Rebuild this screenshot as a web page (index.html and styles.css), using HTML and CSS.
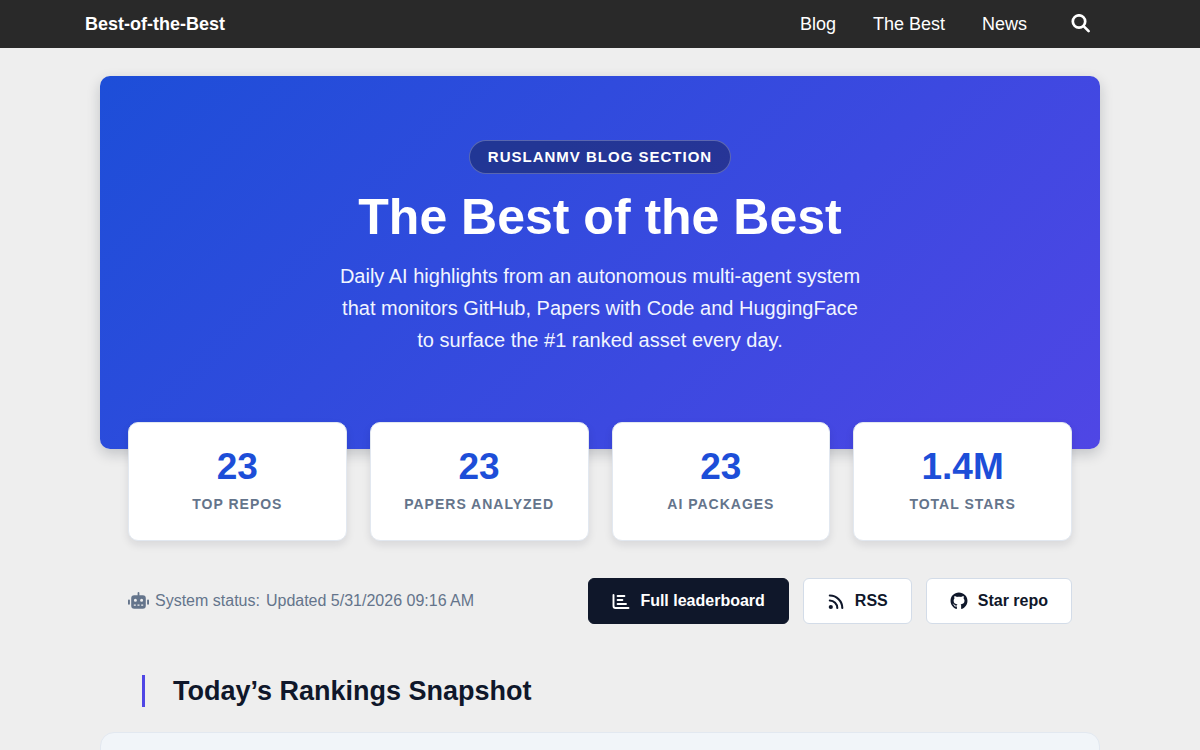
FILE: index.html
```html
<!DOCTYPE html>
<html lang="en">
<head>
<meta charset="utf-8">
<meta name="viewport" content="width=device-width, initial-scale=1">
<title>Best-of-the-Best</title>
<link rel="stylesheet" href="styles.css">
</head>
<body>
<header class="masthead">
  <div class="masthead-inner">
    <a class="brand" href="#">Best-of-the-Best</a>
    <nav class="nav">
      <a href="#">Blog</a>
      <a href="#">The Best</a>
      <a href="#">News</a>
      <button class="search" type="button" aria-label="Search">
        <svg width="20" height="20" viewBox="0 0 20 20" fill="none" stroke="currentColor" stroke-width="2.7" stroke-linecap="round"><circle cx="8" cy="7.500" r="6.200"/><path d="M12.600 12.100l5 5"/></svg>
      </button>
    </nav>
  </div>
</header>
<main class="page">
  <section class="hero">
    <span class="badge">RUSLANMV BLOG SECTION</span>
    <h1>The Best of the Best</h1>
    <p>Daily AI highlights from an autonomous multi-agent system that monitors GitHub, Papers with Code and HuggingFace to surface the #1 ranked asset every day.</p>
  </section>
  <section class="stats">
    <div class="stat"><span class="value">23</span><span class="label">TOP REPOS</span></div>
    <div class="stat"><span class="value">23</span><span class="label">PAPERS ANALYZED</span></div>
    <div class="stat"><span class="value">23</span><span class="label">AI PACKAGES</span></div>
    <div class="stat"><span class="value">1.4M</span><span class="label">TOTAL STARS</span></div>
  </section>
  <section class="toolbar">
    <div class="status">
      <svg width="21" height="18" viewBox="0 0 21 18" fill="currentColor"><path fill-rule="evenodd" d="M9.600 1a.9.9 0 0 1 1.800 0v2.200h3.400a3 3 0 0 1 3 3v7.600a3 3 0 0 1-3 3H6.200a3 3 0 0 1-3-3V6.200a3 3 0 0 1 3-3h3.400zM7.400 6.700a1.500 1.500 0 1 0 0 3 1.500 1.500 0 0 0 0-3zm6.200 0a1.500 1.500 0 1 0 0 3 1.500 1.500 0 0 0 0-3zM5.800 12.500v1.300h2v-1.300zm3.700 0v1.300h2v-1.300zm3.700 0v1.300h2v-1.300z"/><rect x="0" y="7.500" width="1.900" height="5.200" rx=".9"/><rect x="19.100" y="7.500" width="1.900" height="5.200" rx=".9"/></svg>
      <span>System status:</span>
      <span>Updated 5/31/2026 09:16 AM</span>
    </div>
    <div class="actions">
      <a class="btn btn-dark" href="#">
        <svg width="18" height="18" viewBox="0 0 18 18" fill="none" stroke="currentColor" stroke-width="1.900" stroke-linecap="round" stroke-linejoin="round"><path d="M1.500 3v11a2 2 0 0 0 2 2H16.500M5.600 4h6.800M5.600 8h4.800M5.600 12h8.400"/></svg>
        Full leaderboard</a>
      <a class="btn" href="#">
        <svg width="18" height="18" viewBox="0 0 18 18" fill="none" stroke="currentColor" stroke-width="2.100" stroke-linecap="round"><circle cx="3.800" cy="15" r="2.100" fill="currentColor" stroke="none"/><path d="M2.800 8.500a7.500 7.500 0 0 1 7.500 7.500M2.800 3.500a12.500 12.500 0 0 1 12.500 12.500"/></svg>
        RSS</a>
      <a class="btn" href="#">
        <svg width="18" height="18" viewBox="-16 -8 528 528" fill="currentColor"><path d="M165.900 397.400c0 2-2.300 3.600-5.200 3.600-3.300.3-5.600-1.300-5.600-3.600 0-2 2.300-3.600 5.200-3.600 3-.3 5.600 1.300 5.600 3.600zm-31.100-4.500c-.7 2 1.300 4.300 4.300 4.900 2.600 1 5.600 0 6.200-2s-1.300-4.300-4.300-5.200c-2.600-.7-5.500.3-6.200 2.300zm44.200-1.700c-2.900.7-4.900 2.600-4.600 4.900.3 2 2.900 3.300 5.900 2.600 2.900-.7 4.900-2.600 4.600-4.600-.3-1.900-3-3.200-5.900-2.900zM244.800 8C106.100 8 0 113.300 0 252c0 110.900 69.800 205.800 169.500 239.200 12.800 2.300 17.300-5.600 17.300-12.100 0-6.200-.3-40.400-.3-61.400 0 0-70 15-84.700-29.800 0 0-11.400-29.100-27.800-36.600 0 0-22.900-15.700 1.600-15.400 0 0 24.900 2 38.600 25.800 21.900 38.600 58.600 27.500 72.900 20.900 2.300-16 8.800-27.100 16-33.700-55.900-6.200-112.300-14.300-112.300-110.500 0-27.500 7.600-41.300 23.600-58.900-2.600-6.500-11.100-33.300 2.600-67.900 20.900-6.500 69 27 69 27 20-5.600 41.500-8.500 62.800-8.500s42.800 2.900 62.800 8.500c0 0 48.100-33.600 69-27 13.700 34.700 5.200 61.400 2.600 67.900 16 17.700 25.800 31.500 25.800 58.900 0 96.500-58.900 104.200-114.800 110.500 9.200 7.900 17 22.900 17 46.400 0 33.700-.3 75.400-.3 83.600 0 6.500 4.600 14.400 17.300 12.100C428.200 457.800 496 362.900 496 252 496 113.300 383.500 8 244.800 8zM97.200 352.900c-1.300 1-1 3.300.7 5.200 1.600 1.600 3.900 2.300 5.200 1 1.300-1 1-3.300-.7-5.200-1.600-1.600-3.900-2.300-5.200-1zm-10.800-8.100c-.7 1.300.3 2.900 2.300 3.900 1.600 1 3.600.7 4.300-.7.7-1.300-.3-2.900-2.300-3.900-2-.6-3.600-.3-4.300.7zm32.400 35.600c-1.600 1.300-1 4.300 1.300 6.200 2.300 2.300 5.200 2.600 6.500 1 1.300-1.300.7-4.300-1.300-6.200-2.200-2.300-5.200-2.600-6.500-1zm-11.400-14.700c-1.600 1-1.600 3.600 0 5.900 1.600 2.300 4.300 3.300 5.600 2.300 1.600-1.300 1.600-3.900 0-6.200-1.400-2.300-4-3.300-5.600-2z"/></svg>
        Star repo</a>
    </div>
  </section>
  <h2>Today’s Rankings Snapshot</h2>
  <section class="panel"></section>
</main>
</body>
</html>
```
FILE: styles.css
```css
* { box-sizing: border-box; }
body {
  margin: 0;
  background: #eee;
  color: #0f172a;
  font-family: "Liberation Sans", Arial, sans-serif;
  font-size: 16px;
}
a { color: inherit; text-decoration: none; }
svg { display: block; flex: none; }

.masthead {
  background: #292929;
  color: #fff;
}
.masthead-inner {
  max-width: 1030px;
  height: 48px;
  margin: 0 auto;
  padding-right: 24px;
  display: flex;
  align-items: center;
  justify-content: space-between;
  font-size: 18px;
}
.brand { font-weight: 700; }
.nav { display: flex; align-items: center; gap: 37px; }
.search {
  margin-left: 7px;
  padding: 0;
  border: 0;
  background: none;
  color: inherit;
}

.page { max-width: 1000px; margin: 28px auto 0; }

.hero {
  padding: 64px 28px 93px;
  border-radius: 10px;
  background: linear-gradient(135deg, #1d4ed8, #4f46e5);
  box-shadow: 0 5px 14px rgba(15, 23, 42, 0.2);
  color: #fff;
  display: flex;
  flex-direction: column;
  align-items: center;
  text-align: center;
}
.badge {
  padding: 7px 18px;
  border: 1px solid rgba(255, 255, 255, 0.25);
  border-radius: 20px;
  background: rgba(15, 23, 42, 0.4);
  font-size: 15px;
  line-height: 18px;
  font-weight: 700;
  letter-spacing: 1px;
}
.hero h1 { margin: 13px 0 13px; font-size: 50px; line-height: 60px; }
.hero p {
  max-width: 530px;
  margin: 0;
  color: #f1f5ff;
  font-size: 20px;
  line-height: 32px;
}

.stats {
  margin-top: -27px;
  padding: 0 28px;
  display: grid;
  grid-template-columns: repeat(4, 1fr);
  gap: 23px;
}
.stat {
  padding: 22px 12px 25px;
  border: 1px solid #e2e8f0;
  border-radius: 10px;
  background: #fff;
  box-shadow: 0 4px 8px rgba(15, 23, 42, 0.1);
  display: flex;
  flex-direction: column;
  align-items: center;
  gap: 5px;
}
.value { color: #1d4ed8; font-size: 37px; line-height: 44px; font-weight: 700; }
.label {
  color: #64748b;
  font-size: 14px;
  line-height: 21px;
  font-weight: 700;
  letter-spacing: 1px;
}

.toolbar {
  margin: 37px 28px 0;
  display: flex;
  flex-wrap: wrap;
  align-items: center;
  justify-content: space-between;
  gap: 14px;
}
.status { display: flex; align-items: center; gap: 6px; color: #64748b; font-size: 16px; }
.actions { display: flex; flex-wrap: wrap; gap: 14px; }
.btn {
  height: 46px;
  padding: 0 23px;
  border: 1px solid #d3dce8;
  border-radius: 6px;
  background: #fff;
  display: flex;
  align-items: center;
  gap: 10px;
  font-size: 16px;
  font-weight: 700;
}
.btn-dark { border-color: #0f172a; background: #0f172a; color: #fff; }

h2 {
  margin: 51px 42px 25px;
  padding-left: 28px;
  border-left: 3px solid #4f46e5;
  font-size: 27px;
  line-height: 32px;
}
.panel {
  min-height: 320px;
  border: 1px solid #e2e8f0;
  border-radius: 14px;
  background: #f1f5f9;
}
```
